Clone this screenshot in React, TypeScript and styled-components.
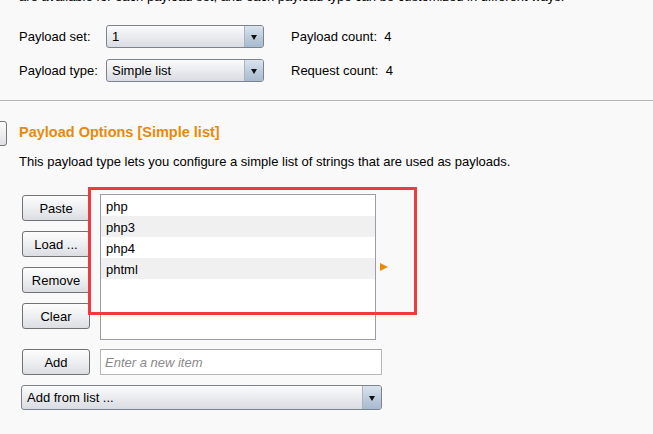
import React from "react";
import styled, { createGlobalStyle } from "styled-components";

const Global = createGlobalStyle`
  html, body { margin: 0; padding: 0; background: #f9f9f9; }
  body { font-family: "Liberation Sans", Arial, sans-serif; font-size: 13px; color: #000; overflow: hidden; }
`;

const Root = styled.div`
  position: relative;
  width: 653px;
  height: 434px;
  overflow: hidden;
  background: #f9f9f9;
`;

const Padded = styled.div`
  padding-left: 19px;
`;

const TopText = styled.div`
  line-height: 16px;
  margin-top: -11px;
  white-space: nowrap;
`;

const FormGrid = styled.div`
  display: grid;
  grid-template-columns: 87px 158px auto;
  grid-auto-rows: 23px;
  row-gap: 11px;
  align-items: center;
  margin-top: 20px;
`;

const Label = styled.span`
  line-height: 16px;
  padding-top: 1px;
`;

const CountLabel = styled.span`
  margin-left: 27px;
  line-height: 16px;
  padding-top: 1px;
`;

const SelectBox = styled.div<{ $w?: number; $h?: number }>`
  display: flex;
  box-sizing: border-box;
  width: ${(p) => (p.$w ? `${p.$w}px` : "100%")};
  height: ${(p) => p.$h ?? 23}px;
  border: 1px solid #7d838c;
  border-radius: 3px;
  background: linear-gradient(#fbfbfc, #e9eaee 55%, #d9dce2);
  overflow: hidden;
`;

const SelectValue = styled.div`
  flex: 1;
  display: flex;
  align-items: center;
  padding-left: 5px;
  padding-top: 1px;
  line-height: 16px;
`;

const SelectArrow = styled.div`
  width: 18px;
  display: flex;
  align-items: center;
  justify-content: center;
  border-left: 1px solid #a8b4c2;
  background: linear-gradient(#dbe4ee, #b9c9da 60%, #a8bbcf);
  &::after {
    content: "";
    border-left: 3.5px solid transparent;
    border-right: 3.5px solid transparent;
    border-top: 5px solid #111;
    margin-top: 1px;
  }
`;

const Divider = styled.div`
  height: 1px;
  background: #b4b4b4;
  margin-top: 18px;
`;

const SectionHeader = styled.div`
  display: flex;
  align-items: flex-start;
  margin-top: 20px;
`;

const CollapseButton = styled.div`
  box-sizing: border-box;
  width: 26px;
  height: 25px;
  margin-left: -38px;
  border: 1px solid #767676;
  border-radius: 3px;
  background: linear-gradient(#fdfdfd, #dfe0e4);
`;

const SectionTitle = styled.div`
  margin-top: 3px;
  margin-left: 12px;
  font-weight: bold;
  font-size: 14.5px;
  color: #e8890c;
  line-height: 17px;
`;

const Description = styled.div`
  margin-top: 8px;
  line-height: 16px;
`;

const Editor = styled.div`
  display: flex;
  gap: 10px;
  margin-top: 24px;
  padding-left: 3px;
`;

const ButtonColumn = styled.div`
  display: flex;
  flex-direction: column;
  gap: 10px;
  margin-top: 1px;
`;

const Button = styled.div`
  box-sizing: border-box;
  width: 68px;
  height: 26px;
  display: flex;
  align-items: center;
  justify-content: center;
  padding-top: 1px;
  border: 1px solid #727272;
  border-radius: 3px;
  background: linear-gradient(#fdfdfd, #eeeff1 50%, #dcdde2);
  line-height: 16px;
`;

const ListBox = styled.div`
  box-sizing: border-box;
  width: 276px;
  height: 146px;
  border: 1px solid #9b9ba8;
  background: #fff;
`;

const ListRow = styled.div<{ $alt: boolean }>`
  height: 21px;
  display: flex;
  align-items: center;
  padding-left: 5px;
  padding-top: 2px;
  box-sizing: border-box;
  background: ${(p) => (p.$alt ? "#f0f0f0" : "#fff")};
  line-height: 16px;
`;

const Marker = styled.div`
  margin-left: -6px;
  margin-top: 69px;
  width: 0;
  height: 0;
  border-top: 4.5px solid transparent;
  border-bottom: 4.5px solid transparent;
  border-left: 8px solid #e8890c;
`;

const AddRow = styled.div`
  display: flex;
  gap: 10px;
  margin-top: 9px;
  padding-left: 3px;
`;

const TextInput = styled.div`
  box-sizing: border-box;
  width: 282px;
  height: 26px;
  display: flex;
  align-items: center;
  padding-left: 4px;
  padding-top: 1px;
  border: 1px solid #b7b7b7;
  border-top-color: #a8a8a8;
  background: #fff;
  color: #8a8a8a;
  font-style: italic;
  line-height: 16px;
`;

const AddFromList = styled.div`
  margin-top: 10px;
  padding-left: 2px;
`;

const Highlight = styled.div`
  position: absolute;
  left: 88px;
  top: 187px;
  width: 329px;
  height: 128px;
  box-sizing: border-box;
  border: 3px solid #f03a3e;
  pointer-events: none;
`;

const items = ["php", "php3", "php4", "phtml"];

export default function App() {
  return (
    <Root>
      <Global />
      <Padded>
        <TopText>
          are available for each payload set, and each payload type can be customized in different ways.
        </TopText>
        <FormGrid>
          <Label>Payload set:</Label>
          <SelectBox>
            <SelectValue>1</SelectValue>
            <SelectArrow />
          </SelectBox>
          <CountLabel>Payload count:&nbsp; 4</CountLabel>
          <Label>Payload type:</Label>
          <SelectBox>
            <SelectValue>Simple list</SelectValue>
            <SelectArrow />
          </SelectBox>
          <CountLabel>Request count:&nbsp; 4</CountLabel>
        </FormGrid>
      </Padded>
      <Divider />
      <Padded>
        <SectionHeader>
          <CollapseButton />
          <SectionTitle>Payload Options [Simple list]</SectionTitle>
        </SectionHeader>
        <Description>
          This payload type lets you configure a simple list of strings that are used as payloads.
        </Description>
        <Editor>
          <ButtonColumn>
            <Button>Paste</Button>
            <Button>Load ...</Button>
            <Button>Remove</Button>
            <Button>Clear</Button>
          </ButtonColumn>
          <ListBox>
            {items.map((it, i) => (
              <ListRow key={it} $alt={i % 2 === 1}>
                {it}
              </ListRow>
            ))}
          </ListBox>
          <Marker />
        </Editor>
        <AddRow>
          <Button>Add</Button>
          <TextInput>Enter a new item</TextInput>
        </AddRow>
        <AddFromList>
          <SelectBox $w={361} $h={25}>
            <SelectValue>Add from list ...</SelectValue>
            <SelectArrow />
          </SelectBox>
        </AddFromList>
      </Padded>
      <Highlight />
    </Root>
  );
}
